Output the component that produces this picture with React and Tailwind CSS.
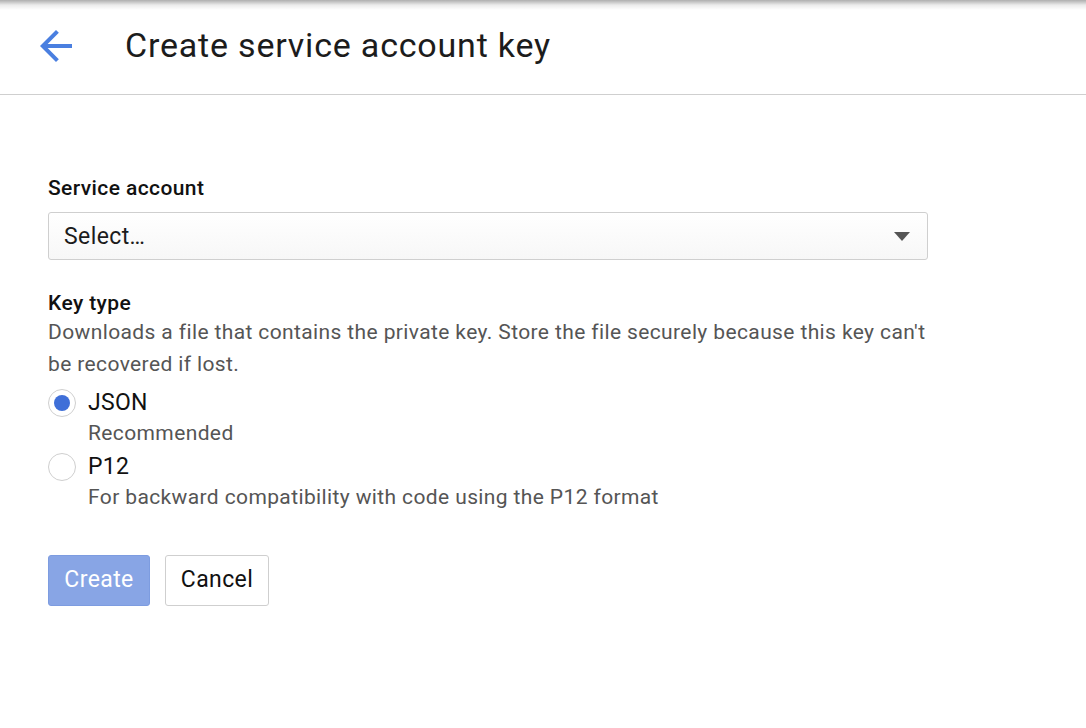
import React from "react";

export default function App() {
  return (
    <div className="w-[1086px] h-[728px] bg-white overflow-hidden relative" style={{ fontFamily: "Roboto, 'Liberation Sans', sans-serif" }}>
      <div className="absolute top-0 left-0 right-0 h-[10px] bg-gradient-to-b from-[#9a9a9a] via-[#e6e6e6] to-white opacity-80" />
      <div className="h-[95px] border-b border-[#cfcfcf] flex items-center">
        <div className="w-[48px] h-[48px] ml-[32px] mt-[-3px]">
          <svg viewBox="0 0 24 24" width="48" height="48">
            <path fill="#4a7fe0" d="M20 11H7.83l5.59-5.59L12 4l-8 8 8 8 1.41-1.41L7.83 13H20v-2z" />
          </svg>
        </div>
        <div className="ml-[45px] mt-[-3px] text-[34px] text-[#1c1c1c] tracking-[0.8px]">Create service account key</div>
      </div>

      <div className="pl-[48px] pt-[80px]">
        <div className="text-[21px] font-medium text-[#111] leading-[26px] tracking-[0.4px]">Service account</div>
        <div className="mt-[11px] w-[880px] h-[48px] border border-[#cfcfcf] rounded-[3px] bg-gradient-to-b from-white to-[#f7f7f7] flex items-center justify-between pl-[15px] pr-[17px]">
          <span className="text-[23px] text-[#1c1c1c] tracking-[0.4px] mt-[2px]">Select…</span>
          <svg width="16" height="9" viewBox="0 0 16 9"><path d="M0 0h16L8 9z" fill="#555" /></svg>
        </div>

        <div className="mt-[30px] text-[21px] font-medium text-[#111] leading-[26px] tracking-[0.4px]">Key type</div>
        <div className="text-[21px] text-[#555] leading-[32px] w-[890px] tracking-[0.38px]">
          Downloads a file that contains the private key. Store the file securely because this key can't be recovered if lost.
        </div>

        <div className="mt-[9px] flex items-start">
          <div className="w-[28px] h-[28px] rounded-full border-[1.5px] border-[#cfcfcf] flex items-center justify-center">
            <div className="w-[16px] h-[16px] rounded-full bg-[#3f6fd8]" />
          </div>
          <div className="ml-[12px]">
            <div className="text-[23px] text-[#111] leading-[28px] tracking-[0.3px]">JSON</div>
            <div className="text-[21px] text-[#555] leading-[32px] tracking-[0.38px]">Recommended</div>
          </div>
        </div>
        <div className="mt-[4px] flex items-start">
          <div className="w-[28px] h-[28px] rounded-full border-[1.5px] border-[#cfcfcf]" />
          <div className="ml-[12px]">
            <div className="text-[23px] text-[#111] leading-[28px] tracking-[0.3px]">P12</div>
            <div className="text-[21px] text-[#555] leading-[32px] tracking-[0.38px]">For backward compatibility with code using the P12 format</div>
          </div>
        </div>

        <div className="mt-[42px] flex gap-[15px]">
          <button className="w-[102px] h-[51px] rounded-[3px] bg-[#88a5e5] border border-[#7d9ce0] text-white text-[23px] tracking-[0.4px]">Create</button>
          <button className="w-[104px] h-[51px] rounded-[3px] bg-white border border-[#cfcfcf] text-[#111] text-[23px] tracking-[0.4px]">Cancel</button>
        </div>
      </div>
    </div>
  );
}
